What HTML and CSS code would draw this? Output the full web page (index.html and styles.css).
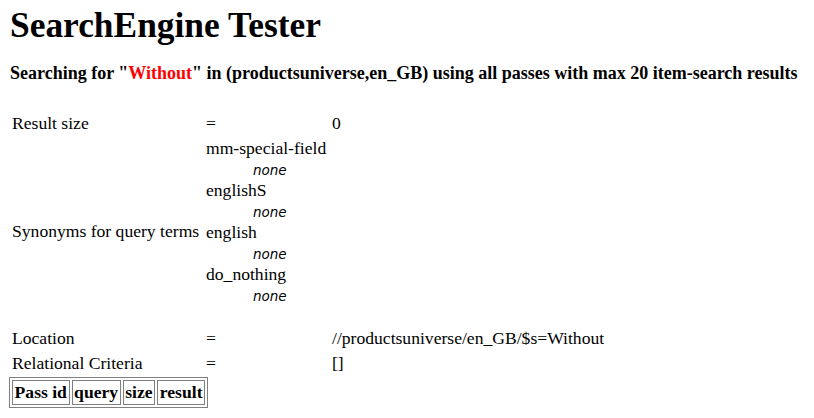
FILE: index.html
```html
<!DOCTYPE html>
<html>
<head>
<meta charset="utf-8">
<title>SearchEngine Tester</title>
<link rel="stylesheet" href="styles.css">
</head>
<body>
<h1 class="title">SearchEngine Tester</h1>
<h4 class="subtitle">Searching for "<span class="term">Without</span>" in (productsuniverse,en_GB) using all passes with max 20 item-search results</h4>
<table class="info">
  <tr><td class="label">Result size</td><td class="eq">=</td><td class="val">0</td></tr>
  <tr>
    <td class="label">Synonyms for query terms</td>
    <td colspan="2" class="syn">
      <dl class="synlist">
        <dt>mm-special-field</dt><dd><i>none</i></dd>
        <dt>englishS</dt><dd><i>none</i></dd>
        <dt>english</dt><dd><i>none</i></dd>
        <dt>do_nothing</dt><dd><i>none</i></dd>
      </dl>
    </td>
  </tr>
  <tr><td class="label">Location</td><td class="eq">=</td><td class="val">//productsuniverse/en_GB/$s=Without</td></tr>
  <tr><td class="label">Relational Criteria</td><td class="eq">=</td><td class="val">[]</td></tr>
</table>
<table class="passes">
  <tr><th>Pass id</th><th>query</th><th>size</th><th>result</th></tr>
</table>
</body>
</html>
```
FILE: styles.css
```css
html, body {
  background: #fff;
  color: #000;
}
body {
  margin: 8px 8px 8px 9px;
  font-family: "Liberation Serif", "Times New Roman", serif;
  font-size: 17.4px;
}
.title {
  font-size: 35.4px;
  font-weight: bold;
  margin: 0 0 0 1px;
  line-height: 34px;
}
.subtitle {
  font-size: 18px;
  font-weight: bold;
  margin: 22px 0 0 1px;
  line-height: 19px;
}
.term {
  color: #ff0000;
}
.info {
  border-collapse: separate;
  border-spacing: 2px;
  margin-top: 27px;
}
.info td,
.passes th {
  font-family: "Liberation Serif", "Times New Roman", serif;
  font-size: 17.6px;
}
.info td {
  padding: 1px;
  line-height: 21px;
  vertical-align: middle;
}
.label {
  width: 190px;
}
.eq {
  width: 122px;
}
.synlist {
  margin: 0 0 18px 0;
}
.synlist dt {
  line-height: 21px;
  height: 21px;
}
.synlist dd {
  margin-left: 47px;
  line-height: 21px;
  height: 21px;
}
.synlist i {
  font-family: "DejaVu Sans", Verdana, sans-serif;
  font-style: oblique;
  font-size: 13.5px;
  line-height: 21px;
}
.passes {
  border: 1px solid #808080;
  border-spacing: 2px;
  margin-top: 0;
}
.passes th {
  border: 1px solid #808080;
  padding: 1px 1.6px;
  font-weight: bold;
  line-height: 21px;
}
```
